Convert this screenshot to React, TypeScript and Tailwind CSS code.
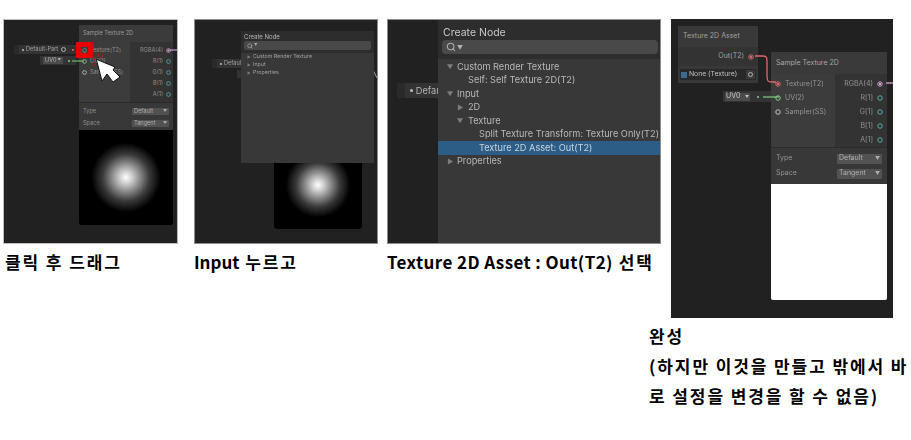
import { Search } from 'lucide-react'

const caption = 'font-["Noto_Sans_CJK_KR",sans-serif] font-bold text-[17px] tracking-[1.9px] text-black whitespace-nowrap'

function Port({ color, filled, className = '' }: { color: string; filled?: boolean; className?: string }) {
  return (
    <svg viewBox="0 0 8 8" className={`shrink-0 ${className}`}>
      <circle cx="4" cy="4" r="3" fill="none" stroke={color} strokeWidth="1.2" />
      {filled && <circle cx="4" cy="4" r="1.6" fill={color} />}
    </svg>
  )
}

function Arrow({ open, small }: { open?: boolean; small?: boolean }) {
  return (
    <svg viewBox="0 0 8 8" className={small ? 'w-[4px] h-[4px] shrink-0' : 'w-[7px] h-[7px] shrink-0'}>
      <path d={open ? 'M0 1.5h7L3.5 7z' : 'M1 0.5v7L7 4z'} fill="#7d7d7d" />
    </svg>
  )
}

function Glow({ className }: { className: string }) {
  return (
    <div className={`bg-black bg-[radial-gradient(circle_at_50%_50%,#ffffff_0%,#d0d0d0_9%,#8a8a8a_21%,#3a3a3a_35%,#000000_52%)] ${className}`} />
  )
}

const leftPorts = [
  { label: 'Texture(T2)', color: '#8f8f8f' },
  { label: 'UV(0)', color: '#9ccc9c' },
  { label: 'Sampler(SS)', color: '#c9c9c9' },
]
const rightPorts = ['R(1)', 'G(1)', 'B(1)', 'A(1)']

function SmallNode() {
  return (
    <div className="absolute left-[75px] top-[5px] w-[94px] text-[#8f8f8f] text-[5.6px] bg-[#333] font-['Inter',sans-serif]">
      <div className="h-[17px] flex items-center px-[4px] bg-[#3b3b3b] text-[#9a9a9a]">Sample Texture 2D</div>
      <div className="h-[61px] flex border-b border-[#2a2a2a]">
        <div className="w-[51px] bg-[#3c3c3c] pt-[3px] pl-[3px]">
          {leftPorts.map((p) => (
            <div key={p.label} className="h-[11px] flex items-center gap-[3px]">
              <Port color={p.color} className="w-[5px] h-[5px]" />
              <span>{p.label}</span>
            </div>
          ))}
        </div>
        <div className="flex-1 pt-[3px] pr-[2px]">
          <div className="h-[11px] flex items-center justify-end gap-[3px]">
            <span>RGBA(4)</span>
            <Port color="#d7a8d7" filled className="w-[5px] h-[5px]" />
          </div>
          {rightPorts.map((p) => (
            <div key={p} className="h-[11px] flex items-center justify-end gap-[3px]">
              <span>{p}</span>
              <Port color="#57b5b5" className="w-[5px] h-[5px]" />
            </div>
          ))}
        </div>
      </div>
      <div className="h-[27px] bg-[#383838] px-[4px] py-[2px]">
        {[['Type', 'Default'], ['Space', 'Tangent']].map(([k, v]) => (
          <div key={k} className="h-[12px] flex items-center justify-between">
            <span>{k}</span>
            <span className="w-[37px] h-[7px] bg-[#515151] text-[#adadad] flex items-center justify-between px-[2px] rounded-[1px]">
              {v}
              <span className="text-[4px]">▼</span>
            </span>
          </div>
        ))}
      </div>
      <Glow className="h-[95px] rounded-b-[2px]" />
    </div>
  )
}

function CreateNode({ className, big, rows }: {
  className: string
  big?: boolean
  rows: { text: string; indent: number; arrow?: 'open' | 'closed'; selected?: boolean }[]
}) {
  return (
    <div className={`absolute bg-[#383838] font-['Inter',sans-serif] ${className}`}>
      <div className={big ? 'bg-[#2d2d2d] h-[39px] px-[4px]' : 'bg-[#2d2d2d] h-[22px] px-[3px]'}>
        <div className={big ? 'text-[10.5px] text-[#c8c8c8] pl-[1px] pt-[6px] leading-[14px]' : 'text-[6px] text-[#b8b8b8] pt-[2px] leading-[8px]'}>
          Create Node
        </div>
        <div className={big ? 'h-[14px] rounded-[4px] bg-[#494949] flex items-center pl-[4px] text-[#b0b0b0]' : 'h-[9px] rounded-[2px] bg-[#494949] flex items-center pl-[3px] text-[#b0b0b0]'}>
          <Search className={big ? 'w-[10px] h-[10px]' : 'w-[6px] h-[6px]'} strokeWidth={2.5} />
          <span className={big ? 'text-[6px] ml-[1px]' : 'text-[3.5px] ml-[1px]'}>▼</span>
        </div>
      </div>
      <div className={big ? 'text-[9.2px] text-[#b9b9b9] pt-[1px]' : 'text-[5.3px] text-[#a0a0a0]'}>
        {rows.map((r) => (
          <div
            key={r.text}
            className={`flex items-center ${big ? 'h-[13.5px] gap-[1px]' : 'h-[8px] gap-[2px]'} ${r.selected ? 'bg-[#2c5d87] text-[#c8d4de]' : ''}`}
          >
            <span className={big ? 'w-[18px] flex justify-end pr-[2px] shrink-0' : 'w-[10px] flex justify-end shrink-0'}>
              {r.indent === 0 && r.arrow && <Arrow open={r.arrow === 'open'} small={!big} />}
            </span>
            {r.indent === 1 && <span className="w-[10px] flex justify-start shrink-0">{r.arrow && <Arrow open={r.arrow === 'open'} />}</span>}
            {r.indent === 2 && <span className="w-[21px] shrink-0" />}
            <span className="whitespace-nowrap">{r.text}</span>
          </div>
        ))}
      </div>
    </div>
  )
}

function FinalNodes() {
  return (
    <>
      <div className="absolute left-[7px] top-[7px] w-[80px] h-[57px] bg-[#303030] text-[7px] text-[#a0a0a0]">
        <div className="h-[21px] bg-[#393939] flex items-center pl-[5px]">Texture 2D Asset</div>
        <div className="h-[19px] bg-[#333] flex items-center justify-end gap-[4px] pr-[4px]">
          <span>Out(T2)</span>
          <Port color="#e06a6a" filled className="w-[6px] h-[6px]" />
        </div>
        <div className="h-[17px] bg-[#383838] flex items-center px-[2px]">
          <div className="flex-1 h-[11px] bg-[#282828] rounded-[1px] flex items-center justify-between px-[1px] text-[#c0c0c0] text-[6.8px]">
            <span className="flex items-center gap-[2px]">
              <span className="w-[6px] h-[6px] bg-[#3d6a8c]" />
              None (Texture)
            </span>
            <span className="w-[9px] h-[9px] bg-[#3c3c3c] flex items-center justify-center rounded-[1px]">
              <span className="w-[5px] h-[5px] rounded-full border border-[#b0b0b0]" />
            </span>
          </div>
        </div>
      </div>

      <div className="absolute left-[52px] top-[72px] w-[48px] h-[11px] bg-[#333] flex items-center pl-[2px] text-[7px]">
        <span className="w-[25px] h-[8px] bg-[#4b4b4b] text-[#c4c4c4] rounded-[1px] flex items-center justify-between px-[1px]">
          UV0<span className="text-[4px]">▼</span>
        </span>
        <span className="ml-[7px] w-[2px] h-[2px] bg-[#7fd07f] rounded-full" />
      </div>

      <div className="absolute left-[100px] top-[33px] w-[116px] text-[7px] text-[#949494] bg-[#333]">
        <div className="h-[22px] bg-[#3a3a3a] flex items-center pl-[5px] text-[#a5a5a5]">Sample Texture 2D</div>
        <div className="h-[74px] flex border-b border-[#2a2a2a]">
          <div className="w-[64px] bg-[#3c3c3c] pt-[3px] pl-[4px]">
            {leftPorts.map((p, i) => (
              <div key={p.label} className="h-[14px] flex items-center gap-[4px]">
                <Port
                  color={['#e06a6a', '#8fd98f', '#cfcfcf'][i]}
                  filled={i === 0}
                  className="w-[6px] h-[6px]"
                />
                <span>{i === 1 ? 'UV(2)' : p.label}</span>
              </div>
            ))}
          </div>
          <div className="flex-1 pt-[3px] pr-[4px]">
            <div className="h-[14px] flex items-center justify-end gap-[4px]">
              <span>RGBA(4)</span>
              <Port color="#d8a4d8" filled className="w-[6px] h-[6px]" />
            </div>
            {['R[1]', 'G[1]', 'B[1]', 'A[1]'].map((p) => (
              <div key={p} className="h-[14px] flex items-center justify-end gap-[4px]">
                <span>{p}</span>
                <Port color="#57b5b5" className="w-[6px] h-[6px]" />
              </div>
            ))}
          </div>
        </div>
        <div className="h-[36px] bg-[#383838] px-[5px] pt-[3px]">
          {[['Type', 'Default'], ['Space', 'Tangent']].map(([k, v]) => (
            <div key={k} className="h-[15px] flex items-center justify-between">
              <span>{k}</span>
              <span className="w-[45px] h-[10px] bg-[#525252] text-[#b0b0b0] flex items-center justify-between px-[2px] rounded-[1px]">
                {v}
                <span className="text-[5px]">▼</span>
              </span>
            </div>
          ))}
        </div>
        <div className="h-[116px] bg-white rounded-b-[2px]" />
      </div>

      <svg className="absolute left-0 top-0 w-[222px] h-[298px] pointer-events-none" viewBox="0 0 222 298" fill="none">
        <path d="M84 37h8c4 0 4 2 4 6v14c0 5 1 6 5 6h4" stroke="#e06a6a" strokeWidth="1.3" />
        <path d="M92 78h16" stroke="#7fd07f" strokeWidth="1.2" />
        <path d="M215 64h7" stroke="#e6b4e6" strokeWidth="1.2" />
      </svg>
    </>
  )
}

export default function App() {
  return (
    <div className="w-[911px] h-[440px] bg-white overflow-hidden flex items-start pt-[19px] pl-[3px]">
      <div className="w-[175px] shrink-0">
        <div className="relative h-[225px] bg-[#212121] border border-[#bdbdbd] overflow-hidden">
          <div className="absolute inset-0 blur-[0.4px]">
            <div className="absolute left-[10px] top-[25px] w-[62px] h-[9px] bg-[#333] flex items-center text-[5.6px] text-[#a0a0a0] font-['Inter',sans-serif]">
              <span className="w-[5px] h-full bg-[#2a2a2a] mr-[3px]" />
              <span className="w-[2px] h-[2px] bg-[#c0c0c0] rounded-full mr-[2px]" />
              Default-Part
              <span className="ml-[3px] w-[5px] h-[5px] rounded-full border border-[#b0b0b0]" />
              <span className="ml-[6px] w-[2px] h-[2px] rounded-full bg-[#e06a6a]" />
            </div>
            <div className="absolute left-[36px] top-[36px] w-[36px] h-[9px] bg-[#333] flex items-center pl-[3px] text-[5.6px] text-[#b0b0b0] font-['Inter',sans-serif]">
              <span className="w-[20px] h-[7px] bg-[#4b4b4b] flex items-center justify-between px-[2px]">
                UV0<span className="text-[3.5px]">▼</span>
              </span>
              <span className="ml-[5px] w-[2px] h-[2px] rounded-full bg-[#7fd07f]" />
            </div>
            <SmallNode />
            <svg className="absolute left-0 top-0 w-[173px] h-[100px] pointer-events-none" viewBox="0 0 173 100" fill="none">
              <path d="M68 41h12" stroke="#7fd07f" strokeWidth="1" />
              <path d="M166 30h7" stroke="#e6b4e6" strokeWidth="1" />
            </svg>
            <div className="absolute left-[72px] top-[22px] w-[17px] h-[16px] border-[5px] border-[#e60000]" />
            <svg className="absolute left-[78px] top-[30px] w-[48px] h-[44px]" viewBox="0 0 48 44" fill="none">
              <path d="M14.3 9.3L20 31l5-7 6 8 7-5-7-7 2-3z" fill="#fff" stroke="#111" strokeWidth="1" />
              <path d="M16 4v3M21 5l-2 3M11 9l2 1M11 15l2-1" stroke="#e60000" strokeWidth="1" />
            </svg>
          </div>
        </div>
        <div className={`${caption} mt-[8px] pl-[2px] leading-[20px]`}>클릭 후 드래그</div>
      </div>

      <div className="w-[184px] shrink-0 ml-[16px]">
        <div className="relative h-[225px] bg-[#212121] border border-[#8c8c8c] overflow-hidden">
          <div className="absolute inset-0 blur-[0.4px]">
            <div className="absolute left-[17px] top-[39px] w-[40px] h-[9px] bg-[#333] flex items-center text-[5.6px] text-[#a0a0a0] font-['Inter',sans-serif]">
              <span className="w-[5px] h-full bg-[#2a2a2a] mr-[3px]" />
              <span className="w-[2px] h-[2px] bg-[#c0c0c0] rounded-full mr-[2px]" />
              Default
            </div>
            <div className="absolute left-[42px] top-[50px] w-[8px] h-[8px] bg-[#333]" />
            <svg className="absolute left-[178px] top-[50px] w-[5px] h-[9px]" viewBox="0 0 5 9" fill="none">
              <path d="M0 0l4 8" stroke="#d8c0d8" strokeWidth="0.8" />
            </svg>
            <Glow className="absolute left-[79px] top-[121px] w-[88px] h-[88px] rounded-b-[3px]" />
            <CreateNode
              className="left-[46px] top-[11px] w-[133px] h-[132px]"
              rows={[
                { text: 'Custom Render Texture', indent: 0, arrow: 'closed' },
                { text: 'Input', indent: 0, arrow: 'closed' },
                { text: 'Properties', indent: 0, arrow: 'closed' },
              ]}
            />
          </div>
        </div>
        <div className={`${caption} mt-[8px] leading-[20px] tracking-[0.6px]`}><span className="tracking-normal">Input</span> 누르고</div>
      </div>

      <div className="w-[274px] shrink-0 ml-[9px]">
        <div className="relative h-[225px] bg-[#212121] border border-[#8c8c8c] overflow-hidden">
          <div className="absolute inset-0 blur-[0.25px]">
            <div className="absolute left-[9px] top-[63px] w-[50px] h-[15px] bg-[#333] flex items-center text-[9.2px] text-[#b5b5b5] font-['Inter',sans-serif]">
              <span className="w-[8px] h-full bg-[#2a2a2a] mr-[5px]" />
              <span className="w-[3px] h-[3px] bg-[#c0c0c0] rounded-full mr-[3px]" />
              Default
            </div>
            <CreateNode
              big
              className="left-[50px] top-0 w-[224px] h-[225px]"
              rows={[
                { text: 'Custom Render Texture', indent: 0, arrow: 'open' },
                { text: 'Self: Self Texture 2D(T2)', indent: 1 },
                { text: 'Input', indent: 0, arrow: 'open' },
                { text: '2D', indent: 1, arrow: 'closed' },
                { text: 'Texture', indent: 1, arrow: 'open' },
                { text: 'Split Texture Transform: Texture Only(T2)', indent: 2 },
                { text: 'Texture 2D Asset: Out(T2)', indent: 2, selected: true },
                { text: 'Properties', indent: 0, arrow: 'closed' },
              ]}
            />
          </div>
        </div>
        <div className={`${caption} mt-[8px] leading-[20px] tracking-[1.4px]`}><span className="tracking-[0.4px]">Texture 2D Asset : Out(T2)</span> 선택</div>
      </div>

      <div className="w-[262px] shrink-0 -ml-[12px]">
        <div className="relative ml-[22px] w-[222px] h-[299px] bg-[#212121] font-['Inter',sans-serif]">
          <div className="absolute inset-0 blur-[0.3px]">
            <FinalNodes />
          </div>
        </div>
        <div className={`${caption} mt-[3px] leading-[30px]`}>
          <div>완성</div>
          <div>(하지만 이것을 만들고 밖에서 바</div>
          <div>로 설정을 변경을 할 수 없음)</div>
        </div>
      </div>
    </div>
  )
}
